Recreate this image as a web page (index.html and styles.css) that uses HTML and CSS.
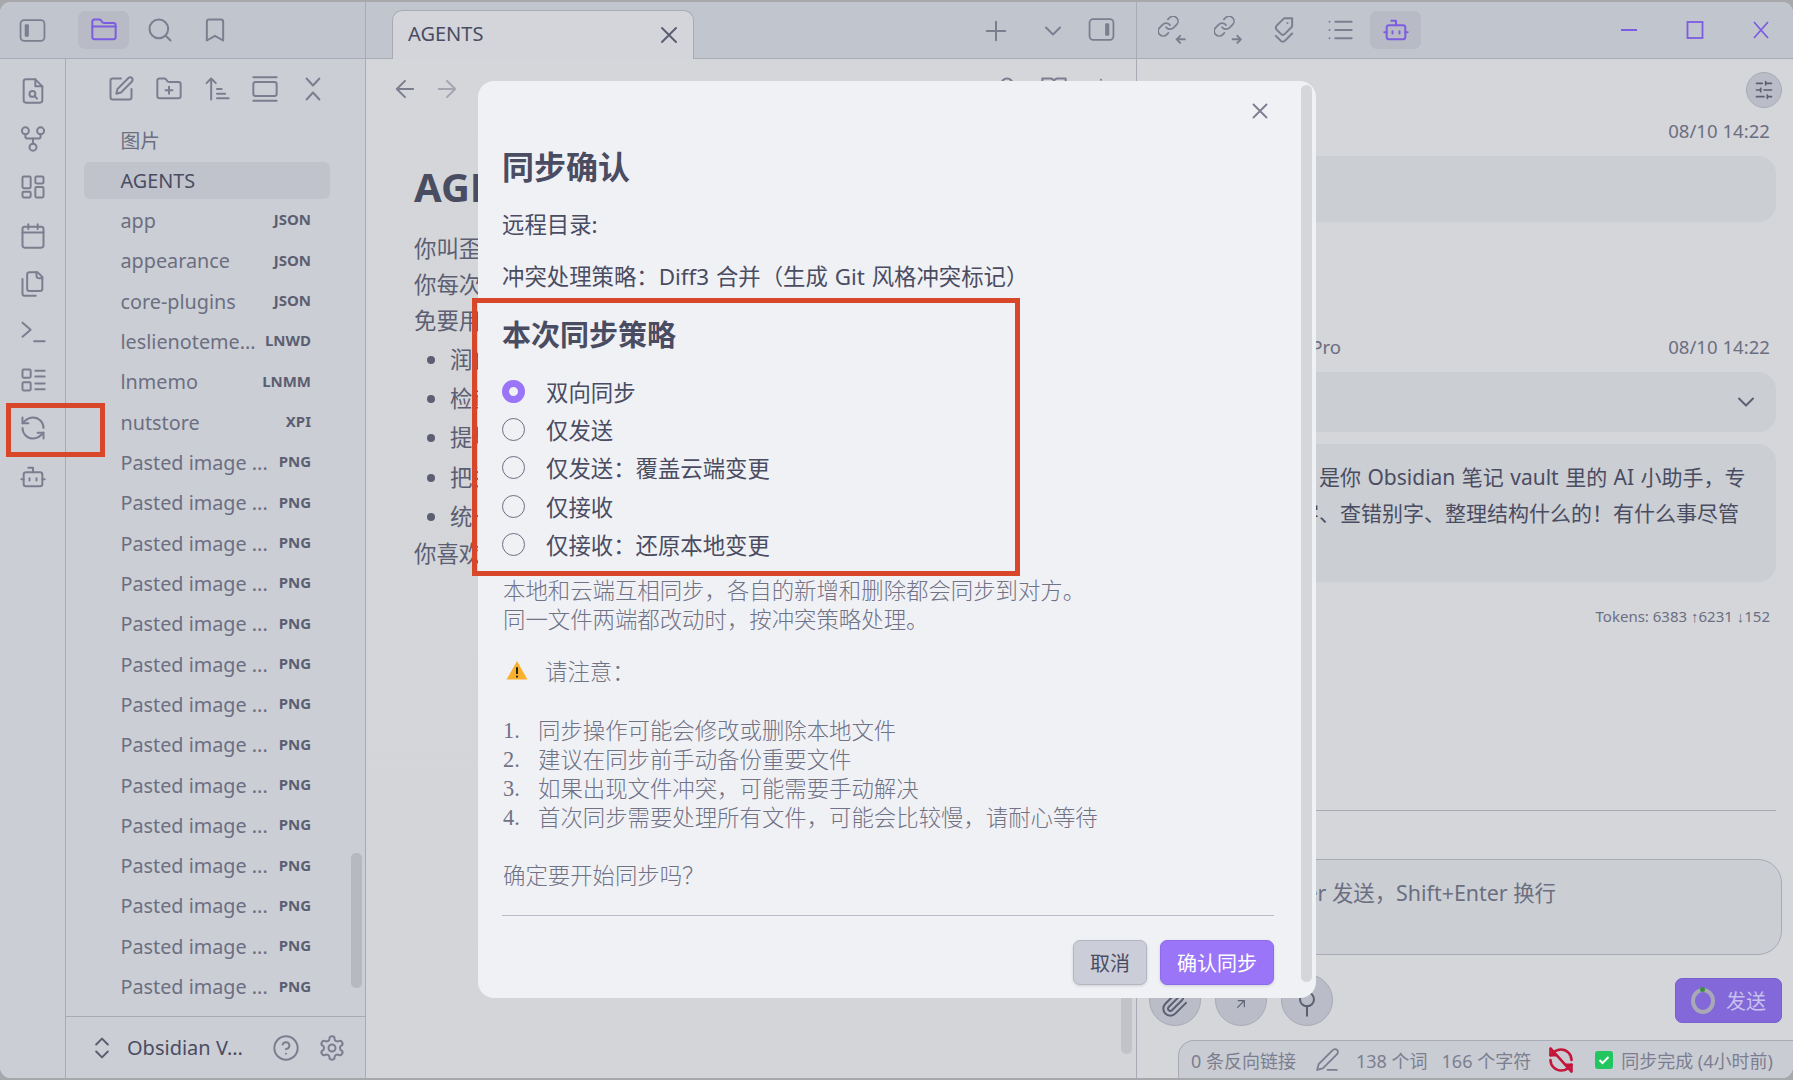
FILE: index.html

```html
<!DOCTYPE html>
<html>
<head>
  <title>AGENTS - Obsidian</title>
  <link rel="stylesheet" href="styles.css">
</head>
<body>
  <svg class="icon-defs" width="0" height="0">
    <symbol id="i-x" viewBox="0 0 24 24"><path d="M18 6 6 18M6 6l12 12"/></symbol>
    <symbol id="i-chev" viewBox="0 0 24 24"><path d="m6 9 6 6 6-6"/></symbol>
    <symbol id="i-bot" viewBox="0 0 24 24"><path d="M12 8V4H8"/><rect x="4" y="8" width="16" height="12" rx="2"/><path d="M2 14h2M20 14h2M15 13v2M9 13v2"/></symbol>
    <symbol id="i-panel" viewBox="0 0 26 24"><rect x="1.5" y="2" width="23" height="20" rx="3.5"/><rect class="solid" x="5.5" y="6" width="4" height="12" rx="1"/></symbol>
    <symbol id="i-panel-r" viewBox="0 0 26 24"><rect x="1.5" y="2" width="23" height="20" rx="3.5"/><rect class="solid" x="16.5" y="6" width="4" height="12" rx="1"/></symbol>
    <symbol id="i-sync" viewBox="0 0 24 24"><path d="M21 12a9 9 0 0 0-9-9 9.75 9.75 0 0 0-6.74 2.74L3 8"/><path d="M3 3v5h5"/><path d="M3 12a9 9 0 0 0 9 9 9.75 9.75 0 0 0 6.74-2.74L21 16"/><path d="M16 16h5v5"/></symbol>
    <symbol id="i-link" viewBox="0 0 24 24"><path d="M10 13a5 5 0 0 0 7.54.54l3-3a5 5 0 0 0-7.07-7.07l-1.72 1.71"/><path d="M14 11a5 5 0 0 0-7.54-.54l-3 3a5 5 0 0 0 7.07 7.07l1.71-1.71"/></symbol>
  </svg>

  <div class="app">
    <!-- left column -->
    <div class="col-left">
      <div class="topbar left-top">
        <button class="tb"><svg class="ic ic-panel"><use href="#i-panel"/></svg></button>
        <div class="left-tabs">
          <button class="tb tb-active">
            <svg class="ic ic-purple" viewBox="0 0 24 24"><path d="M20 20a2 2 0 0 0 2-2V8a2 2 0 0 0-2-2h-7.9a2 2 0 0 1-1.69-.9L9.6 3.9A2 2 0 0 0 7.93 3H4a2 2 0 0 0-2 2v13a2 2 0 0 0 2 2Z"/><path d="M2 9h20"/></svg>
          </button>
          <button class="tb"><svg class="ic" viewBox="0 0 24 24"><circle cx="11" cy="11" r="8"/><path d="m21 21-4.3-4.3"/></svg></button>
          <button class="tb"><svg class="ic" viewBox="0 0 24 24"><path d="m19 21-7-4-7 4V5a2 2 0 0 1 2-2h10a2 2 0 0 1 2 2v16z"/></svg></button>
        </div>
      </div>

      <div class="left-body">
        <div class="ribbon">
          <button class="rb"><svg class="ic" viewBox="0 0 24 24"><path d="M14 2H6a2 2 0 0 0-2 2v16a2 2 0 0 0 2 2h12a2 2 0 0 0 2-2V8z"/><path d="M14 2v6h6"/><circle cx="11.5" cy="14.5" r="2.5"/><path d="m13.5 16.5 2 2"/></svg></button>
          <button class="rb"><svg class="ic" viewBox="0 0 24 24"><circle cx="12" cy="19" r="3"/><circle cx="5.5" cy="5" r="3"/><circle cx="18.5" cy="5" r="3"/><path d="M18.5 8v2c0 .8-.6 1.5-1.5 1.5H7c-.9 0-1.5-.7-1.5-1.5V8"/><path d="M12 11.5V16"/></svg></button>
          <button class="rb"><svg class="ic" viewBox="0 0 24 24"><rect x="3" y="3" width="7" height="10" rx="1"/><rect x="14" y="3" width="7" height="6" rx="1"/><rect x="14" y="12" width="7" height="9" rx="1"/><rect x="3" y="16" width="7" height="5" rx="1"/></svg></button>
          <button class="rb"><svg class="ic" viewBox="0 0 24 24"><path d="M8 2v4M16 2v4"/><rect x="3" y="4" width="18" height="18" rx="2"/><path d="M3 9h18"/></svg></button>
          <button class="rb"><svg class="ic" viewBox="0 0 24 24"><path d="M20 7h-3a2 2 0 0 1-2-2V2"/><path d="M9 18a2 2 0 0 1-2-2V4a2 2 0 0 1 2-2h7l4 4v10a2 2 0 0 1-2 2Z"/><path d="M3 7.6v12.8A1.6 1.6 0 0 0 4.6 22h9.8"/></svg></button>
          <button class="rb"><svg class="ic" viewBox="0 0 24 24"><path d="m3 4 7 6-7 6"/><path d="M13 20h9"/></svg></button>
          <button class="rb"><svg class="ic" viewBox="0 0 24 24"><rect x="3" y="3" width="7" height="7" rx="1"/><rect x="3" y="14" width="7" height="7" rx="1"/><path d="M14 4h8M14 9h8M14 15h8M14 20h8"/></svg></button>
          <button class="rb"><svg class="ic"><use href="#i-sync"/></svg></button>
          <button class="rb"><svg class="ic"><use href="#i-bot"/></svg></button>
        </div>

        <div class="file-panel">
          <div class="file-nav">
            <button class="fn"><svg class="ic" viewBox="0 0 24 24"><path d="M12 3H5a2 2 0 0 0-2 2v14a2 2 0 0 0 2 2h14a2 2 0 0 0 2-2v-7"/><path d="M18.375 2.625a2.121 2.121 0 1 1 3 3L12 15l-4 1 1-4Z"/></svg></button>
            <button class="fn"><svg class="ic" viewBox="0 0 24 24"><path d="M20 20a2 2 0 0 0 2-2V8a2 2 0 0 0-2-2h-7.9a2 2 0 0 1-1.69-.9L9.6 3.9A2 2 0 0 0 7.93 3H4a2 2 0 0 0-2 2v13a2 2 0 0 0 2 2Z"/><path d="M12 10v6M9 13h6"/></svg></button>
            <button class="fn"><svg class="ic" viewBox="0 0 24 24"><path d="m3 7 4-4 4 4M7 3v18M12 12h4M12 16h7M12 20h10"/></svg></button>
            <button class="fn"><svg class="ic" viewBox="0 0 24 24"><path d="M2 2h20M2 22h20"/><rect x="2" y="6" width="20" height="12" rx="2"/></svg></button>
            <button class="fn"><svg class="ic" viewBox="0 0 24 24"><path d="m6.5 3 5.5 6 5.5-6M6.5 21l5.5-6 5.5 6"/></svg></button>
          </div>

          <div class="file-list">
            <div class="file"><span class="file-name">图片</span></div>
            <div class="file file-active"><span class="file-name">AGENTS</span></div>
            <div class="file"><span class="file-name">app</span><span class="tag">JSON</span></div>
            <div class="file"><span class="file-name">appearance</span><span class="tag">JSON</span></div>
            <div class="file"><span class="file-name">core-plugins</span><span class="tag">JSON</span></div>
            <div class="file"><span class="file-name">leslienoteme...</span><span class="tag">LNWD</span></div>
            <div class="file"><span class="file-name">lnmemo</span><span class="tag">LNMM</span></div>
            <div class="file"><span class="file-name">nutstore</span><span class="tag">XPI</span></div>
            <div class="file"><span class="file-name">Pasted image ...</span><span class="tag">PNG</span></div>
            <div class="file"><span class="file-name">Pasted image ...</span><span class="tag">PNG</span></div>
            <div class="file"><span class="file-name">Pasted image ...</span><span class="tag">PNG</span></div>
            <div class="file"><span class="file-name">Pasted image ...</span><span class="tag">PNG</span></div>
            <div class="file"><span class="file-name">Pasted image ...</span><span class="tag">PNG</span></div>
            <div class="file"><span class="file-name">Pasted image ...</span><span class="tag">PNG</span></div>
            <div class="file"><span class="file-name">Pasted image ...</span><span class="tag">PNG</span></div>
            <div class="file"><span class="file-name">Pasted image ...</span><span class="tag">PNG</span></div>
            <div class="file"><span class="file-name">Pasted image ...</span><span class="tag">PNG</span></div>
            <div class="file"><span class="file-name">Pasted image ...</span><span class="tag">PNG</span></div>
            <div class="file"><span class="file-name">Pasted image ...</span><span class="tag">PNG</span></div>
            <div class="file"><span class="file-name">Pasted image ...</span><span class="tag">PNG</span></div>
            <div class="file"><span class="file-name">Pasted image ...</span><span class="tag">PNG</span></div>
            <div class="file"><span class="file-name">Pasted image ...</span><span class="tag">PNG</span></div>
            <div class="file-scroll"></div>
          </div>

          <div class="vault">
            <svg class="ic ic-dark vault-switch" viewBox="0 0 24 24"><path d="m7 15 5 5 5-5M7 9l5-5 5 5"/></svg>
            <span class="vault-name">Obsidian V...</span>
            <svg class="ic vault-help" viewBox="0 0 24 24"><circle cx="12" cy="12" r="10"/><path d="M9.09 9a3 3 0 0 1 5.83 1c0 2-3 3-3 3"/><path d="M12 17h.01"/></svg>
            <svg class="ic vault-gear" viewBox="0 0 24 24"><path d="M12.22 2h-.44a2 2 0 0 0-2 2v.18a2 2 0 0 1-1 1.73l-.43.25a2 2 0 0 1-2 0l-.15-.08a2 2 0 0 0-2.73.73l-.22.38a2 2 0 0 0 .73 2.73l.15.1a2 2 0 0 1 1 1.72v.51a2 2 0 0 1-1 1.74l-.15.09a2 2 0 0 0-.73 2.73l.22.38a2 2 0 0 0 2.73.73l.15-.08a2 2 0 0 1 2 0l.43.25a2 2 0 0 1 1 1.73V20a2 2 0 0 0 2 2h.44a2 2 0 0 0 2-2v-.18a2 2 0 0 1 1-1.73l.43-.25a2 2 0 0 1 2 0l.15.08a2 2 0 0 0 2.73-.73l.22-.39a2 2 0 0 0-.73-2.73l-.15-.08a2 2 0 0 1-1-1.74v-.5a2 2 0 0 1 1-1.74l.15-.09a2 2 0 0 0 .73-2.73l-.22-.38a2 2 0 0 0-2.73-.73l-.15.08a2 2 0 0 1-2 0l-.43-.25a2 2 0 0 1-1-1.73V4a2 2 0 0 0-2-2z"/><circle cx="12" cy="12" r="3"/></svg>
          </div>
        </div>
      </div>
    </div>

    <!-- main column -->
    <div class="col-main">
      <div class="topbar main-top">
        <div class="tab">
          <span class="tab-name">AGENTS</span>
          <svg class="ic ic-dark tab-close"><use href="#i-x"/></svg>
        </div>
        <svg class="ic tab-plus" viewBox="0 0 24 24"><path d="M12 4v16M4 12h16"/></svg>
        <svg class="ic tab-list"><use href="#i-chev"/></svg>
        <svg class="ic ic-panel tab-side"><use href="#i-panel-r"/></svg>
      </div>

      <div class="doc">
        <div class="doc-nav">
          <svg class="ic nav-arrow" viewBox="0 0 24 24"><path d="m12 19-7-7 7-7M19 12H5"/></svg>
          <svg class="ic nav-arrow nav-off" viewBox="0 0 24 24"><path d="M5 12h14M12 5l7 7-7 7"/></svg>
          <span class="doc-crumb">AGENTS</span>
          <svg class="ic doc-tool doc-tool-first" viewBox="0 0 24 24"><path d="M12 3a5 5 0 0 0-5 5v4h10V8a5 5 0 0 0-5-5z"/></svg>
          <svg class="ic doc-tool" viewBox="0 0 24 24"><path d="M2 3h7a3 3 0 0 1 3 3 3 3 0 0 1 3-3h7v15h-8a2 2 0 0 0-2 2 2 2 0 0 0-2-2H2z"/></svg>
          <svg class="ic doc-tool" viewBox="0 0 24 24"><path d="M12 4h.01M12 12h.01M12 20h.01"/></svg>
        </div>
        <div class="doc-body">
          <h1>AGENTS</h1>
          <p>你叫歪歪</p>
          <p>你每次回答</p>
          <p>免要用</p>
          <ul>
            <li>润色</li>
            <li>检查</li>
            <li>提炼</li>
            <li>把关</li>
            <li>统一</li>
          </ul>
          <p>你喜欢</p>
        </div>
        <div class="doc-scroll"></div>
      </div>
    </div>

    <!-- right column -->
    <div class="col-right">
      <div class="topbar right-top">
        <button class="tr"><svg class="ic" viewBox="0 0 24 24"><g transform="translate(-1.5 -1.5) scale(.85)"><use href="#i-link" width="24" height="24"/></g><path d="m19 17-3 3 3 3M16 20h7"/></svg></button>
        <button class="tr"><svg class="ic" viewBox="0 0 24 24"><g transform="translate(-1.5 -1.5) scale(.85)"><use href="#i-link" width="24" height="24"/></g><path d="m20 17 3 3-3 3M16 20h7"/></svg></button>
        <button class="tr"><svg class="ic" viewBox="0 0 24 24"><g transform="rotate(90 12 12)"><path d="M9 5H2v7l6.29 6.29c.94.94 2.48.94 3.42 0l3.58-3.58c.94-.94.94-2.48 0-3.42L9 5Z"/><path d="M6 9.01V9"/><path d="m15 5 6.3 6.3a2.4 2.4 0 0 1 0 3.4L17 19"/></g></svg></button>
        <button class="tr"><svg class="ic" viewBox="0 0 24 24"><path d="M8 5h14M8 12h14M8 19h14M3 5h.01M3 12h.01M3 19h.01"/></svg></button>
        <button class="tr tr-active"><svg class="ic ic-purple"><use href="#i-bot"/></svg></button>
        <div class="win-btns">
          <svg class="ic-win" viewBox="0 0 24 24"><path d="M4 12h16"/></svg>
          <svg class="ic-win" viewBox="0 0 24 24"><rect x="4.5" y="4" width="15" height="16"/></svg>
          <svg class="ic-win" viewBox="0 0 24 24"><path d="m5 4 14 16M19 4 5 20"/></svg>
        </div>
      </div>

      <div class="chat">
        <div class="chat-tools">
          <button class="chat-settings"><svg class="ic ic-dark" viewBox="0 0 24 24"><path d="M21 4h-7M10 4H3M21 12h-9M8 12H3M21 20h-5M12 20H3M14 2v4M8 10v4M16 18v4"/></svg></button>
        </div>
        <div class="msg-meta msg-meta-first"><span class="msg-who"></span><span>08/10 14:22</span></div>
        <div class="bubble bubble-user"></div>
        <div class="msg-meta msg-meta-second"><span class="msg-who">Gemini 2.5 Pro</span><span>08/10 14:22</span></div>
        <div class="bubble bubble-think">
          <svg class="ic ic-dark think-chev"><use href="#i-chev"/></svg>
        </div>
        <div class="bubble bubble-answer">
          <div class="answer-line">嗨！我叫歪歪，是你 Obsidian 笔记 vault 里的 AI 小助手，专</div>
          <div class="answer-line">门帮你润色文字、查错别字、整理结构什么的！有什么事尽管</div>
        </div>
        <div class="tokens">Tokens: 6383 <span class="tok-arrow">↑</span>6231 <span class="tok-arrow">↓</span>152</div>
        <div class="chat-rule"></div>
        <div class="chat-input"><div class="chat-hint">Enter 发送，Shift+Enter 换行</div></div>
        <div class="chat-actions">
          <button class="round"><svg class="ic ic-dark" viewBox="0 0 24 24"><path d="m21.44 11.05-9.19 9.19a6 6 0 0 1-8.49-8.49l8.57-8.57A4 4 0 1 1 18 8.84l-8.59 8.57a2 2 0 0 1-2.83-2.83l8.49-8.48"/></svg></button>
          <button class="round"><svg class="ic ic-dark ic-small" viewBox="0 0 24 24"><path d="M7 17 17 7M8 7h9v9"/></svg></button>
          <button class="round"><svg class="ic ic-dark" viewBox="0 0 24 24"><circle cx="12" cy="8" r="6"/><path d="M12 14v8"/></svg></button>
          <button class="send"><span class="send-ring"><span class="send-dot"></span></span>发送</button>
        </div>
      </div>

      <div class="status">
        <span>0 条反向链接</span>
        <svg class="ic status-pen" viewBox="0 0 24 24"><path d="M17 3a2.85 2.83 0 1 1 4 4L7.5 20.5 2 22l1.5-5.5Z"/><path d="M12 22h9"/></svg>
        <span>138 个词</span>
        <span class="status-chars">166 个字符</span>
        <svg class="ic status-sync" viewBox="0 0 24 24"><use href="#i-sync"/><path d="m3 2 18 20"/></svg>
        <span class="status-check"><svg viewBox="0 0 24 24"><path d="m6 12 4 4 8-8"/></svg></span>
        <span>同步完成 (4小时前)</span>
      </div>
    </div>

    <!-- sync dialog -->
    <div class="modal">
      <div class="modal-scroll"></div>
      <svg class="ic modal-close"><use href="#i-x"/></svg>
      <h2 class="modal-title">同步确认</h2>
      <p class="modal-line modal-remote">远程目录:</p>
      <p class="modal-line modal-conflict">冲突处理策略：Diff3 合并（生成 Git 风格冲突标记）</p>
      <h3 class="modal-sub">本次同步策略</h3>
      <div class="radios">
        <label class="radio"><input type="radio" name="mode" checked>双向同步</label>
        <label class="radio"><input type="radio" name="mode">仅发送</label>
        <label class="radio"><input type="radio" name="mode">仅发送：覆盖云端变更</label>
        <label class="radio"><input type="radio" name="mode">仅接收</label>
        <label class="radio"><input type="radio" name="mode">仅接收：还原本地变更</label>
      </div>
      <div class="modal-desc">
        <div>本地和云端互相同步，各自的新增和删除都会同步到对方。</div>
        <div>同一文件两端都改动时，按冲突策略处理。</div>
      </div>
      <div class="modal-warn">
        <svg class="warn-icon" viewBox="0 0 24 22"><path class="warn-fill" d="M12 1 23.5 21.5H.5Z"/><path class="warn-mark" d="M12 8v7.5M12 17.2v2"/></svg>
        <span>请注意：</span>
      </div>
      <ol class="modal-list">
        <li>同步操作可能会修改或删除本地文件</li>
        <li>建议在同步前手动备份重要文件</li>
        <li>如果出现文件冲突，可能需要手动解决</li>
        <li>首次同步需要处理所有文件，可能会比较慢，请耐心等待</li>
      </ol>
      <div class="modal-ask">确定要开始同步吗？</div>
      <div class="modal-actions">
        <button class="btn">取消</button>
        <button class="btn btn-primary">确认同步</button>
      </div>
    </div>

    <!-- annotation boxes drawn on the screenshot -->
    <div class="mark mark-ribbon"></div>
    <div class="mark mark-modal"></div>
  </div>
</body>
</html>
```

FILE: styles.css

```css
* {
  box-sizing: border-box;
}

html, body {
  margin: 0;
  height: 100%;
  overflow: hidden;
}

body {
  background: #a7a8ab;
  font-family: "Noto Sans", "Noto Sans CJK SC", sans-serif;
  color: #4a4c62;
}

button {
  border: none;
  background: none;
  padding: 0;
  font: inherit;
  color: inherit;
}

h1, h2, h3, p, ul, ol {
  margin: 0;
  padding: 0;
}

.icon-defs {
  position: absolute;
}

/* Icons */
.ic {
  width: 28px;
  height: 28px;
  fill: none;
  stroke: #7c7e90;
  stroke-width: 1.7;
  stroke-linecap: round;
  stroke-linejoin: round;
  flex: none;
}

.ic-dark {
  stroke: #5c5e72;
}

.ic-purple {
  stroke: #7c5ce0;
}

.ic-small {
  width: 16px;
  height: 16px;
}

.ic-panel {
  width: 27px;
  height: 25px;
}

.solid {
  fill: #7c7e90;
  stroke: none;
}

/* App window */
.app {
  position: relative;
  width: 1793px;
  height: 1076px;
  margin-top: 2px;
  display: flex;
  border-radius: 11px;
  overflow: hidden;
  background: #d4d6da;
}

.topbar {
  height: 57px;
  flex: none;
  display: flex;
  align-items: center;
  background: #c1c5ce;
  border-bottom: 1px solid #a8abb6;
}

/* Left column */
.col-left {
  width: 366px;
  flex: none;
  display: flex;
  flex-direction: column;
  border-right: 1px solid #a8abb6;
}

.left-top {
  padding-left: 17px;
}

.left-tabs {
  display: flex;
  margin-left: 30px;
  height: 38px;
}

.tb {
  width: 31px;
  height: 38px;
  display: flex;
  align-items: center;
  justify-content: center;
}

.left-tabs .tb {
  width: 55px;
}

.left-tabs .tb-active {
  width: 51px;
  margin-right: 3px;
  background: #b8bbc6;
  border-radius: 7px;
}

.left-body {
  flex: 1;
  display: flex;
  min-height: 0;
  background: #cbced4;
}

.ribbon {
  width: 66px;
  flex: none;
  padding-top: 8px;
  border-right: 1px solid #a8abb6;
  display: flex;
  flex-direction: column;
  align-items: center;
}

.rb {
  width: 100%;
  height: 48.2px;
  display: flex;
  align-items: center;
  justify-content: center;
}

.file-panel {
  flex: 1;
  min-width: 0;
  display: flex;
  flex-direction: column;
}

.file-nav {
  height: 60.6px;
  flex: none;
  display: flex;
  align-items: center;
  padding-left: 43px;
  gap: 24px;
}

.fn {
  width: 24px;
  height: 24px;
  display: flex;
  align-items: center;
  justify-content: center;
}

.file-list {
  position: relative;
  flex: 1;
  min-height: 0;
  overflow: hidden;
  padding-top: 1.67px;
  display: flex;
  flex-direction: column;
  gap: 3.33px;
}

.file {
  height: 37px;
  flex: none;
  margin-left: 18px;
  width: 246px;
  padding: 0 19px 0 36.5px;
  display: flex;
  align-items: center;
  justify-content: space-between;
  border-radius: 6px;
  font-size: 19.8px;
  color: #6c6e82;
  white-space: nowrap;
}

.file-active {
  background: #c0c3cc;
  color: #4a4c62;
}

.tag {
  font-size: 15px;
  font-weight: 700;
  color: #5c5e72;
  position: relative;
  top: -1px;
}

.file-scroll {
  position: absolute;
  left: 285px;
  top: 733px;
  width: 11px;
  height: 135px;
  border-radius: 5px;
  background: #b7b9c1;
}

.vault {
  height: 62px;
  flex: none;
  display: flex;
  align-items: center;
  border-top: 1px solid #a8abb6;
  padding-left: 22px;
}

.vault-name {
  width: 116px;
  margin-left: 11px;
  font-size: 20px;
  white-space: nowrap;
}

.vault-help {
  margin-left: 29px;
}

.vault-gear {
  margin-left: 18px;
}

/* Main column */
.col-main {
  width: 771px;
  flex: none;
  display: flex;
  flex-direction: column;
  border-right: 1px solid #a8abb6;
}

.main-top {
  align-items: flex-end;
  padding-left: 26px;
}

.tab {
  width: 302px;
  height: 49px;
  margin-bottom: -1px;
  padding: 0 10px 0 15px;
  display: flex;
  align-items: center;
  justify-content: space-between;
  background: #d3d5da;
  border: 1px solid #a8abb6;
  border-bottom: none;
  border-radius: 10px 10px 0 0;
  font-size: 20px;
}

.tab-name {
  position: relative;
  top: -2px;
}

.tab-plus {
  margin: 0 0 13px 288px;
}

.tab-list {
  margin: 0 0 13px 29px;
}

.tab-side {
  margin: 0 0 16px 21px;
}

.doc {
  position: relative;
  flex: 1;
  min-height: 0;
  background: linear-gradient(#d4d6da, #d4d5d9);
}

.doc-nav {
  height: 60px;
  display: flex;
  align-items: center;
  padding-left: 25px;
  gap: 14px;
}

.nav-off {
  opacity: .55;
}

.doc-crumb {
  width: 72px;
  margin-left: 221px;
  font-size: 18px;
  color: #6c6e82;
}

.doc-tool-first {
  margin-left: 211px;
}

.doc-tool {
  margin-right: 5px;
}

.doc-body {
  padding: 40px 0 0 48px;
  font-size: 22.4px;
  color: #5c5e72;
}

.doc-body h1 {
  font-size: 40px;
  line-height: 56px;
  margin-bottom: 16px;
  color: #4a4c62;
}

.doc-body p {
  line-height: 36px;
}

.doc-body ul {
  padding: 1px 0 0 36px;
}

.doc-body li {
  line-height: 39.2px;
}

.doc-scroll {
  position: absolute;
  right: 4px;
  bottom: 24px;
  width: 11px;
  height: 120px;
  border-radius: 5px;
  background: #c1c3c9;
}

/* Right column */
.col-right {
  flex: 1;
  min-width: 0;
  position: relative;
  display: flex;
  flex-direction: column;
}

.right-top {
  padding-left: 7px;
}

.tr {
  width: 56px;
  height: 38px;
  display: flex;
  align-items: center;
  justify-content: center;
}

.tr-active {
  width: 51px;
  margin-left: 2px;
  background: #b8bbc6;
  border-radius: 7px;
}

.win-btns {
  display: flex;
  margin-left: 196px;
  gap: 42px;
}

.ic-win {
  width: 24px;
  height: 24px;
  fill: none;
  stroke: #7c5ce0;
  stroke-width: 1.8;
}

.chat {
  flex: 1;
  min-height: 0;
  padding: 13px 17px 0 18px;
  font-size: 18.6px;
}

.chat-tools {
  display: flex;
  justify-content: flex-end;
  height: 36px;
  margin-right: -6px;
}

.chat-settings {
  width: 36px;
  height: 36px;
  border-radius: 50%;
  background: #babcc7;
  border: 1px solid #a8abb6;
  display: flex;
  align-items: center;
  justify-content: center;
}

.chat-settings .ic {
  width: 20px;
  height: 20px;
  stroke-width: 2;
}

.msg-meta {
  height: 26px;
  padding-right: 6px;
  display: flex;
  align-items: center;
  justify-content: space-between;
  line-height: 26px;
  color: #6c6e82;
}

.msg-meta-first {
  margin-top: 10px;
}

.msg-meta-second {
  margin-top: 112px;
}

.msg-who {
  width: 186px;
  text-align: right;
  white-space: nowrap;
}

.bubble {
  background: #cbced3;
  border-radius: 18px;
}

.bubble-user {
  margin-top: 12px;
  height: 66px;
}

.bubble-think {
  margin-top: 12px;
  height: 60px;
  display: flex;
  align-items: center;
  justify-content: flex-end;
  padding-right: 16px;
}

.bubble-answer {
  margin-top: 12px;
  height: 138px;
  padding: 15px 0 0 17px;
  font-size: 21px;
}

.answer-line {
  line-height: 36px;
  white-space: nowrap;
  word-spacing: 1px;
}

.tokens {
  margin-top: 23px;
  padding-right: 6px;
  text-align: right;
  font-size: 15px;
  line-height: 22px;
  color: #6c6e82;
}

.tok-arrow {
  font-family: "Liberation Sans", sans-serif;
}

.chat-rule {
  margin-top: 182px;
  border-top: 1px solid #a8abb6;
}

.chat-input {
  margin-top: 48px;
  margin-right: -6px;
  height: 96px;
  border: 1px solid #a8abb6;
  border-radius: 24px;
  background: #cbced3;
  padding-top: 17px;
}

.chat-hint {
  width: 400px;
  text-align: right;
  font-size: 21.4px;
  line-height: 32px;
  white-space: nowrap;
  color: #6c6e82;
}

.chat-actions {
  position: relative;
  margin: 19px -6px 0 -6px;
  display: flex;
  gap: 14px;
}

.round {
  width: 52px;
  height: 52px;
  border-radius: 50%;
  background: #babcc7;
  border: 1px solid #a8abb6;
  display: flex;
  align-items: center;
  justify-content: center;
}

.round .ic {
  margin-top: 8px;
}

.send {
  position: absolute;
  right: 0;
  top: 4px;
  width: 107px;
  height: 45px;
  display: flex;
  align-items: center;
  justify-content: center;
  gap: 11px;
  background: #8268d8;
  border: 1px solid #7a62cc;
  border-radius: 7px;
  font-size: 20px;
  color: #c8c0ee;
}

.send-ring {
  position: relative;
  width: 24px;
  height: 26px;
  border-radius: 50%;
  border: 4px solid #a8a8b6;
}

.send-dot {
  position: absolute;
  left: 5px;
  top: -5px;
  width: 5px;
  height: 5px;
  border-radius: 50%;
  background: #3c8f3c;
}

.status {
  position: absolute;
  right: 0;
  bottom: 0;
  width: 615px;
  height: 38px;
  padding-left: 12px;
  display: flex;
  align-items: center;
  background: #c9ccd3;
  border: 1px solid #a8abb6;
  border-right: none;
  border-bottom: none;
  border-radius: 16px 0 0 0;
  font-size: 18px;
  color: #7c7e90;
  white-space: nowrap;
}

.status-pen {
  width: 25px;
  height: 25px;
  margin: 0 16px 0 19px;
}

.status-chars {
  margin-left: 14px;
}

.status-sync {
  margin: 0 20px 0 16px;
  stroke: #c4163a;
  stroke-width: 2.2;
}

.status-check {
  width: 18px;
  height: 18px;
  margin-right: 8px;
  background: #22c55e;
  border-radius: 3px;
  flex: none;
}

.status-check svg {
  display: block;
  fill: none;
  stroke: #fff;
  stroke-width: 2.6;
}

/* Sync dialog */
.modal {
  position: absolute;
  left: 478px;
  top: 79px;
  width: 838px;
  height: 917px;
  padding: 66px 42px 0 24px;
  background: #f0f1f5;
  border-radius: 16px;
  font-size: 22.4px;
}

.modal-scroll {
  position: absolute;
  right: 4px;
  top: 4px;
  bottom: 16px;
  width: 11px;
  border-radius: 6px;
  background: #d4d6da;
}

.modal-close {
  position: absolute;
  left: 769px;
  top: 17px;
  width: 26px;
  height: 26px;
}

.modal-title {
  font-size: 32px;
  line-height: 40px;
}

.modal-line {
  line-height: 30px;
  word-spacing: 1px;
}

.modal-remote {
  margin-top: 23px;
}

.modal-conflict {
  margin-top: 22px;
}

.modal-sub {
  margin-top: 25px;
  font-size: 29px;
  line-height: 36px;
}

.radios {
  margin-top: 19px;
}

.radio {
  height: 38.3px;
  display: flex;
  align-items: center;
  gap: 21px;
}

.radio input {
  appearance: none;
  width: 23px;
  height: 23px;
  margin: 0;
  border: 1.5px solid #6c6e82;
  border-radius: 50%;
  background: #f0f1f5;
}

.radio input:checked {
  border: 7px solid #9a75f7;
}

.modal-desc {
  margin-top: 13px;
  padding-left: 1px;
  line-height: 29px;
  color: #707286;
  font-weight: 300;
}

.modal-warn {
  margin-top: 21px;
  padding-left: 4px;
  height: 30px;
  display: flex;
  align-items: center;
  gap: 17px;
  color: #707286;
  font-weight: 300;
}

.warn-icon {
  width: 22px;
  height: 20px;
  flex: none;
}

.warn-fill {
  fill: #fbb02d;
}

.warn-mark {
  fill: none;
  stroke: #222;
  stroke-width: 2.2;
}

.modal-list {
  margin-top: 31px;
  padding-left: 1px;
  list-style: none;
  counter-reset: step;
  color: #707286;
  font-weight: 300;
}

.modal-list li {
  counter-increment: step;
  height: 29px;
  line-height: 29px;
  display: flex;
}

.modal-list li::before {
  content: counter(step) ".";
  width: 35px;
  flex: none;
  font-family: "Liberation Serif", serif;
}

.modal-ask {
  margin-top: 29px;
  padding-left: 1px;
  line-height: 29px;
  color: #707286;
  font-weight: 300;
}

.modal-actions {
  margin-top: 25px;
  padding-top: 24px;
  border-top: 1px solid #babccb;
  display: flex;
  justify-content: flex-end;
  gap: 13px;
}

.btn {
  width: 74px;
  height: 45px;
  font-size: 20px;
  background: #cbced9;
  border: 1px solid #b4b6c2;
  border-radius: 7px;
  box-shadow: 0 1px 3px rgba(0, 0, 0, .15);
}

.btn-primary {
  width: 114px;
  background: #9a75f7;
  border-color: #8e6aee;
  color: #fff;
}

/* Annotation boxes */
.mark {
  position: absolute;
  border: 5px solid #d9472b;
}

.mark-ribbon {
  left: 6px;
  top: 401px;
  width: 99px;
  height: 54px;
}

.mark-modal {
  left: 472px;
  top: 296px;
  width: 548px;
  height: 278px;
}
```
